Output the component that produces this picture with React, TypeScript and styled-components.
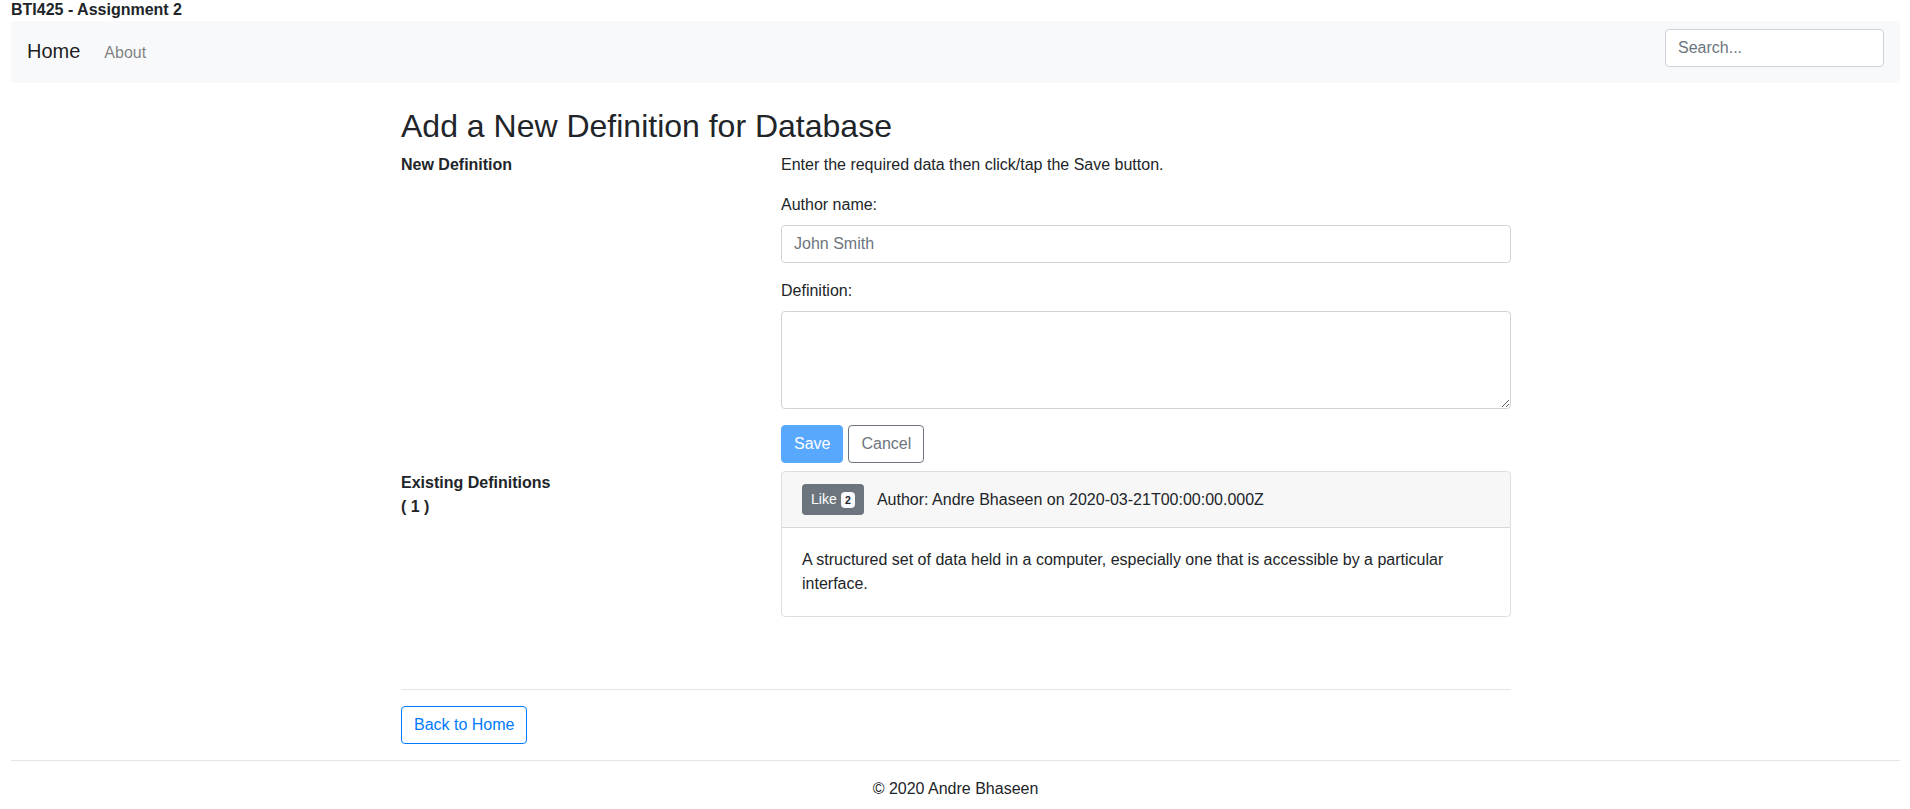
import React from "react";
import styled, { createGlobalStyle } from "styled-components";

const GlobalStyle = createGlobalStyle`
  *, *::before, *::after { box-sizing: border-box; }
  body {
    margin: 0;
    font-family: "Liberation Sans", Arial, sans-serif;
    font-size: 16px;
    line-height: 1.5;
    color: #212529;
    background: #ffffff;
  }
`;

const Page = styled.div`
  padding: 0 10px 0 11px;
`;

const SiteTitle = styled.div`
  font-weight: 700;
  line-height: 19px;
  padding-bottom: 2px;
`;

const Navbar = styled.nav`
  display: flex;
  align-items: center;
  justify-content: space-between;
  height: 62px;
  padding: 8px 16px;
  background: #f8f9fa;
`;

const NavLeft = styled.div`
  display: flex;
  align-items: baseline;
`;

const Brand = styled.a`
  font-size: 20px;
  line-height: 30px;
  padding: 5px 0;
  margin-right: 16px;
  color: rgba(0, 0, 0, 0.9);
  text-decoration: none;
`;

const NavLink = styled.a`
  padding: 8px;
  line-height: 24px;
  color: rgba(0, 0, 0, 0.5);
  text-decoration: none;
`;

const baseInput = `
  display: block;
  height: 38px;
  padding: 6px 12px;
  font-family: "Liberation Sans", Arial, sans-serif;
  font-size: 16px;
  line-height: 1.5;
  color: #495057;
  background: #fff;
  border: 1px solid #ced4da;
  border-radius: 4px;
  outline: none;
  &::placeholder { color: #6c757d; opacity: 1; }
`;

const SearchInput = styled.input`
  ${baseInput}
  align-self: flex-start;
  width: 219px;
`;

const Container = styled.main`
  width: 1110px;
  margin-left: calc(50% - 554.5px);
  padding-top: 24px;
`;

const Heading = styled.h2`
  font-size: 32px;
  font-weight: 500;
  line-height: 1.2;
  margin: 0 0 8px;
`;

const Row = styled.section`
  display: grid;
  grid-template-columns: 350px 730px;
  column-gap: 30px;
`;

const SectionLabel = styled.div`
  font-weight: 700;
`;

const Intro = styled.p`
  margin: 0 0 16px;
`;

const FormGroup = styled.div`
  margin-bottom: 16px;
`;

const Label = styled.label`
  display: block;
  margin-bottom: 8px;
`;

const TextInput = styled.input`
  ${baseInput}
  width: 100%;
`;

const TextArea = styled.textarea`
  ${baseInput}
  width: 100%;
  height: 98px;
  resize: vertical;
`;

const ButtonRow = styled.div`
  display: flex;
  gap: 5px;
  padding-bottom: 8px;
`;

const Button = styled.button<{ $variant: "primary" | "outline-secondary" | "outline-primary"; $disabled?: boolean }>`
  display: inline-block;
  height: 38px;
  padding: 6px 12px;
  font-family: "Liberation Sans", Arial, sans-serif;
  font-size: 16px;
  line-height: 1.5;
  border-radius: 4px;
  border: 1px solid
    ${(p) => (p.$variant === "outline-secondary" ? "#6c757d" : "#007bff")};
  background: ${(p) => (p.$variant === "primary" ? "#007bff" : "#fff")};
  color: ${(p) =>
    p.$variant === "primary" ? "#fff" : p.$variant === "outline-secondary" ? "#6c757d" : "#007bff"};
  opacity: ${(p) => (p.$disabled ? 0.65 : 1)};
  cursor: pointer;
`;

const Card = styled.div`
  border: 1px solid rgba(0, 0, 0, 0.125);
  border-radius: 4px;
  overflow: hidden;
`;

const CardHeader = styled.div`
  display: flex;
  align-items: center;
  padding: 12px 20px;
  background: rgba(0, 0, 0, 0.03);
  border-bottom: 1px solid rgba(0, 0, 0, 0.125);
`;

const LikeButton = styled.button`
  display: inline-flex;
  align-items: center;
  height: 31px;
  padding: 4px 8px;
  font-family: "Liberation Sans", Arial, sans-serif;
  font-size: 14px;
  line-height: 21px;
  color: #fff;
  background: #6c757d;
  border: 1px solid #6c757d;
  border-radius: 3.2px;
`;

const Badge = styled.span`
  display: inline-block;
  margin-left: 4px;
  padding: 2.6px 4.2px;
  font-size: 10.5px;
  font-weight: 700;
  line-height: 1;
  color: #212529;
  background: #f8f9fa;
  border-radius: 4px;
`;

const AuthorText = styled.span`
  margin-left: 13px;
`;

const CardBody = styled.div`
  padding: 20px;
`;

const CardText = styled.p`
  margin: 0;
`;

const Divider = styled.hr`
  border: 0;
  border-top: 1px solid rgba(0, 0, 0, 0.1);
  margin: 72px 0 16px;
`;

const Footer = styled.footer`
  margin-top: 16px;
  padding-top: 16px;
  border-top: 1px solid rgba(0, 0, 0, 0.1);
  text-align: center;
`;

export default function App() {
  return (
    <>
      <GlobalStyle />
      <Page>
        <SiteTitle>BTI425 - Assignment 2</SiteTitle>
        <Navbar>
          <NavLeft>
            <Brand href="#">Home</Brand>
            <NavLink href="#">About</NavLink>
          </NavLeft>
          <SearchInput placeholder="Search..." />
        </Navbar>
        <Container>
          <Heading>Add a New Definition for Database</Heading>
          <Row>
            <SectionLabel>New Definition</SectionLabel>
            <div>
              <Intro>Enter the required data then click/tap the Save button.</Intro>
              <FormGroup>
                <Label>Author name:</Label>
                <TextInput placeholder="John Smith" />
              </FormGroup>
              <FormGroup>
                <Label>Definition:</Label>
                <TextArea />
              </FormGroup>
              <ButtonRow>
                <Button $variant="primary" $disabled>Save</Button>
                <Button $variant="outline-secondary">Cancel</Button>
              </ButtonRow>
            </div>
          </Row>
          <Row>
            <SectionLabel>
              Existing Definitions
              <br />( 1 )
            </SectionLabel>
            <Card>
              <CardHeader>
                <LikeButton>
                  Like<Badge>2</Badge>
                </LikeButton>
                <AuthorText>Author: Andre Bhaseen on 2020-03-21T00:00:00.000Z</AuthorText>
              </CardHeader>
              <CardBody>
                <CardText>
                  A structured set of data held in a computer, especially one that is accessible by a
                  particular interface.
                </CardText>
              </CardBody>
            </Card>
          </Row>
          <Divider />
          <Button $variant="outline-primary">Back to Home</Button>
        </Container>
        <Footer>© 2020 Andre Bhaseen</Footer>
      </Page>
    </>
  );
}
